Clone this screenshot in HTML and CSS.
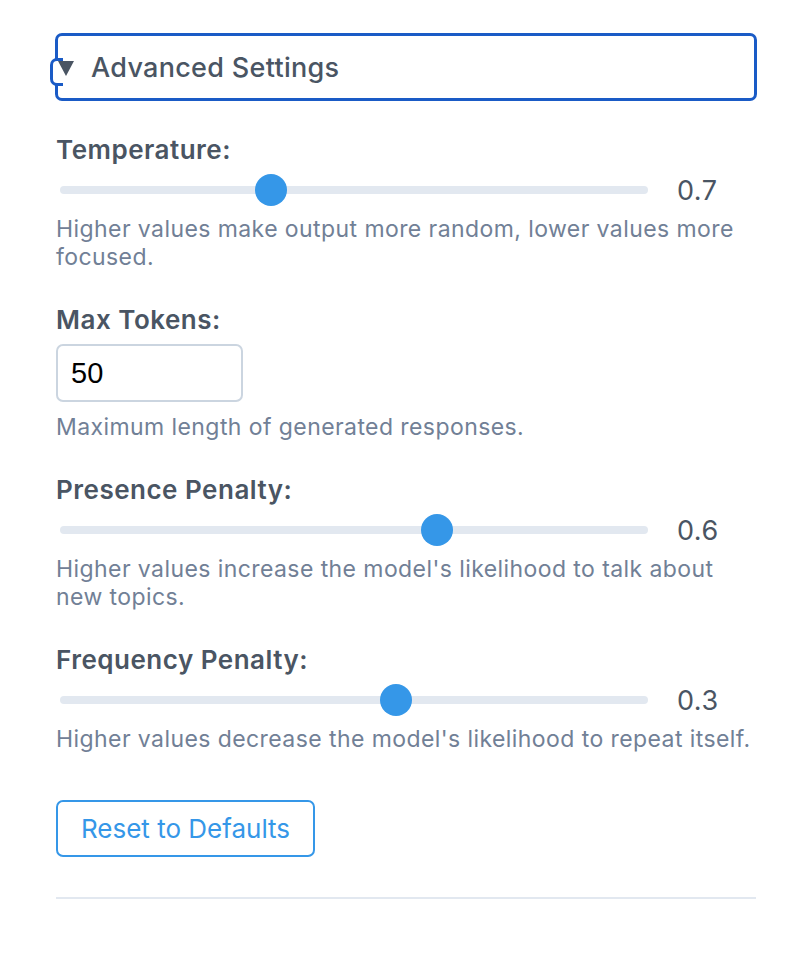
FILE: index.html
```html
<!DOCTYPE html>
<html lang="en">
<head>
<meta charset="utf-8">
<title>Advanced Settings</title>
<link rel="stylesheet" href="styles.css">
</head>
<body>
<div class="panel">
  <details class="advanced" open>
    <summary class="advanced-summary"><span class="caret"></span>Advanced Settings</summary>
    <div class="settings">
      <div class="field">
        <label class="field-label" for="temperature">Temperature:</label>
        <div class="slider-row">
          <input class="slider" id="temperature" type="range" min="0" max="2" step="0.1" value="0.7">
          <span class="slider-value">0.7</span>
        </div>
        <p class="hint">Higher values make output more random, lower values more focused.</p>
      </div>
      <div class="field">
        <label class="field-label" for="max-tokens">Max Tokens:</label>
        <input class="number-input" id="max-tokens" type="number" value="50">
        <p class="hint hint-input">Maximum length of generated responses.</p>
      </div>
      <div class="field">
        <label class="field-label" for="presence">Presence Penalty:</label>
        <div class="slider-row">
          <input class="slider" id="presence" type="range" min="-2" max="2" step="0.1" value="0.6">
          <span class="slider-value">0.6</span>
        </div>
        <p class="hint">Higher values increase the model's likelihood to talk about new topics.</p>
      </div>
      <div class="field">
        <label class="field-label" for="frequency">Frequency Penalty:</label>
        <div class="slider-row">
          <input class="slider" id="frequency" type="range" min="-2" max="2" step="0.1" value="0.3">
          <span class="slider-value">0.3</span>
        </div>
        <p class="hint">Higher values decrease the model's likelihood to repeat itself.</p>
      </div>
      <button class="reset-btn" type="button">Reset to Defaults</button>
    </div>
  </details>
  <hr class="divider">
</div>
</body>
</html>
```
FILE: styles.css
```css
* { box-sizing: border-box; }

html, body {
  margin: 0;
  padding: 0;
  background: #ffffff;
}

body {
  font-family: Inter, "Noto Sans", "Liberation Sans", sans-serif;
  color: #4a5563;
}

.panel {
  width: 756px;
  padding: 33px 0 0 56px;
}

.advanced {
  margin: 0;
}

.advanced-summary {
  list-style: none;
  position: relative;
  display: flex;
  align-items: center;
  height: 68px;
  margin-left: -1px;
  width: 702px;
  border: 3px solid #1a5bc6;
  border-radius: 7px;
  font-size: 27px;
  letter-spacing: 0.3px;
  font-weight: 500;
  color: #4a5563;
  cursor: pointer;
  padding-left: 33px;
}

.advanced-summary::-webkit-details-marker { display: none; }

.advanced-summary::before {
  content: "";
  position: absolute;
  left: -8px;
  top: 22px;
  width: 10px;
  height: 22px;
  border: 3px solid #1a5bc6;
  border-right: none;
  border-radius: 7px 0 0 7px;
  background: #ffffff;
}

.caret {
  position: absolute;
  left: 0;
  top: 25px;
  width: 0;
  height: 0;
  border-left: 8px solid transparent;
  border-right: 8px solid transparent;
  border-top: 15px solid #4a5563;
  z-index: 1;
}

.settings {
  padding-top: 33px;
}

.field {
  margin-bottom: 33px;
}

.field-label {
  display: block;
  font-size: 26px;
  letter-spacing: 0.5px;
  line-height: 32px;
  font-weight: 600;
  color: #4a5563;
  margin-bottom: 8px;
}

.slider-row {
  display: flex;
  align-items: center;
  height: 32px;
  margin-bottom: 9px;
}

.slider {
  -webkit-appearance: none;
  appearance: none;
  width: 588px;
  height: 32px;
  margin: 0 0 0 4px;
  padding: 0;
  background: transparent;
}

.slider::-webkit-slider-runnable-track {
  height: 8px;
  border-radius: 4px;
  background: #e2e8f0;
}

.slider::-webkit-slider-thumb {
  -webkit-appearance: none;
  appearance: none;
  width: 32px;
  height: 32px;
  margin-top: -12px;
  border-radius: 50%;
  background: #3597e8;
  border: none;
}

.slider-value {
  margin-left: 29px;
  font-size: 27px;
  letter-spacing: 0.5px;
  color: #4a5563;
}

.hint {
  margin: 0;
  font-size: 23px;
  letter-spacing: 0.42px;
  line-height: 28px;
  color: #718096;
}

.hint-input {
  margin-top: 11px;
}

.number-input {
  display: block;
  width: 187px;
  height: 58px;
  padding: 0 13px;
  border: 2px solid #cbd5e0;
  border-radius: 7px;
  font-family: "Liberation Sans", Arial, sans-serif;
  font-size: 29px;
  color: #000000;
  background: #ffffff;
  -moz-appearance: textfield;
}

.number-input::-webkit-inner-spin-button,
.number-input::-webkit-outer-spin-button {
  -webkit-appearance: none;
  margin: 0;
}

.reset-btn {
  display: block;
  margin-top: 47px;
  width: 259px;
  height: 57px;
  padding: 0;
  border: 2px solid #3597e8;
  border-radius: 7px;
  background: #ffffff;
  color: #3597e8;
  font-family: Inter, "Noto Sans", "Liberation Sans", sans-serif;
  font-size: 26px;
  cursor: pointer;
}

.divider {
  width: 700px;
  margin: 40px 0 0 0;
  border: none;
  border-top: 2px solid #e2e8f0;
  height: 0;
}
```
